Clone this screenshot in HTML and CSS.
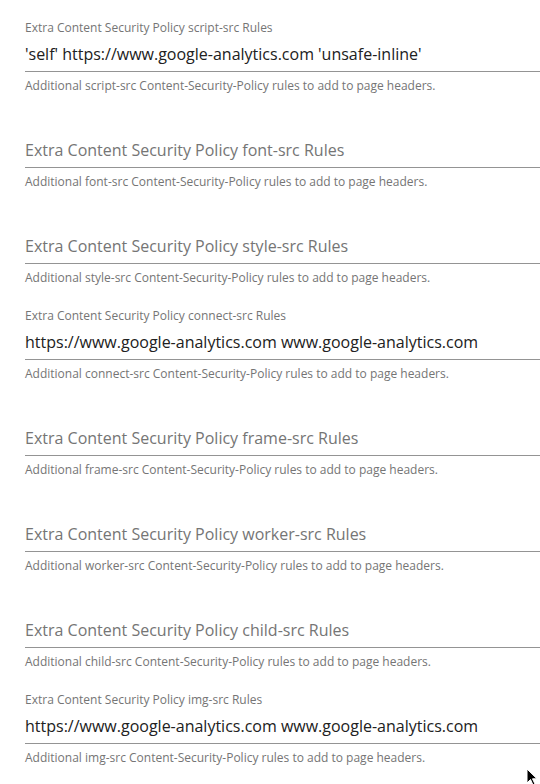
FILE: index.html
```html
<!DOCTYPE html>
<html lang="en">
<head>
  <meta charset="UTF-8" />
  <title>Content Security Policy Settings</title>
  <link rel="stylesheet" href="styles.css">
</head>
<body>
  <div class="settings">
    <div class="field">
      <label for="scriptSrc">Extra Content Security Policy script-src Rules</label>
      <input id="scriptSrc" type="text" value="'self' https://www.google-analytics.com 'unsafe-inline'">
      <p class="help">Additional script-src Content-Security-Policy rules to add to page headers.</p>
    </div>
    <div class="field empty">
      <label for="fontSrc">Extra Content Security Policy font-src Rules</label>
      <input id="fontSrc" type="text" placeholder="Extra Content Security Policy font-src Rules">
      <p class="help">Additional font-src Content-Security-Policy rules to add to page headers.</p>
    </div>
    <div class="field empty">
      <label for="styleSrc">Extra Content Security Policy style-src Rules</label>
      <input id="styleSrc" type="text" placeholder="Extra Content Security Policy style-src Rules">
      <p class="help">Additional style-src Content-Security-Policy rules to add to page headers.</p>
    </div>
    <div class="field">
      <label for="connectSrc">Extra Content Security Policy connect-src Rules</label>
      <input id="connectSrc" type="text" value="https://www.google-analytics.com www.google-analytics.com">
      <p class="help">Additional connect-src Content-Security-Policy rules to add to page headers.</p>
    </div>
    <div class="field empty">
      <label for="frameSrc">Extra Content Security Policy frame-src Rules</label>
      <input id="frameSrc" type="text" placeholder="Extra Content Security Policy frame-src Rules">
      <p class="help">Additional frame-src Content-Security-Policy rules to add to page headers.</p>
    </div>
    <div class="field empty">
      <label for="workerSrc">Extra Content Security Policy worker-src Rules</label>
      <input id="workerSrc" type="text" placeholder="Extra Content Security Policy worker-src Rules">
      <p class="help">Additional worker-src Content-Security-Policy rules to add to page headers.</p>
    </div>
    <div class="field empty">
      <label for="childSrc">Extra Content Security Policy child-src Rules</label>
      <input id="childSrc" type="text" placeholder="Extra Content Security Policy child-src Rules">
      <p class="help">Additional child-src Content-Security-Policy rules to add to page headers.</p>
    </div>
    <div class="field">
      <label for="imgSrc">Extra Content Security Policy img-src Rules</label>
      <input id="imgSrc" type="text" value="https://www.google-analytics.com www.google-analytics.com">
      <p class="help">Additional img-src Content-Security-Policy rules to add to page headers.</p>
    </div>
  </div>

  <svg class="cursor" width="12" height="18" viewBox="0 0 12 18">
    <path d="M1 1 L1 15 L4.5 11.5 L7 17 L9 16 L6.5 10.8 L11 10.8 Z" fill="#000" stroke="#fff" stroke-width="1"/>
  </svg>
</body>
</html>
```

FILE: styles.css
```css
html, body {
  margin: 0;
  padding: 0;
  background: #fff;
  overflow: hidden;
}
body {
  font-family: 'Open Sans', sans-serif;
  color: #212121;
}
.settings {
  padding: 20px 0 0 25px;
}
.field {
  margin-bottom: 22px;
}
.field label {
  display: block;
  font-size: 12px;
  line-height: 16px;
  height: 16px;
  color: #757575;
}
.field.empty label { visibility: hidden; }
.field input {
  display: block;
  box-sizing: content-box;
  width: 100%;
  height: 22px;
  margin: 7px 0 0;
  padding: 0 0 6px;
  border: none;
  border-bottom: 1px solid #949494;
  outline: none;
  background: transparent;
  font-family: 'Open Sans', sans-serif;
  font-size: 16px;
  line-height: 22px;
  color: #212121;
}
.field input::placeholder {
  color: #757575;
  opacity: 1;
}
.help {
  margin: 6px 0 0;
  font-size: 12px;
  line-height: 16px;
  color: #757575;
}
.cursor {
  position: absolute;
  left: 526px;
  top: 768px;
}
```
